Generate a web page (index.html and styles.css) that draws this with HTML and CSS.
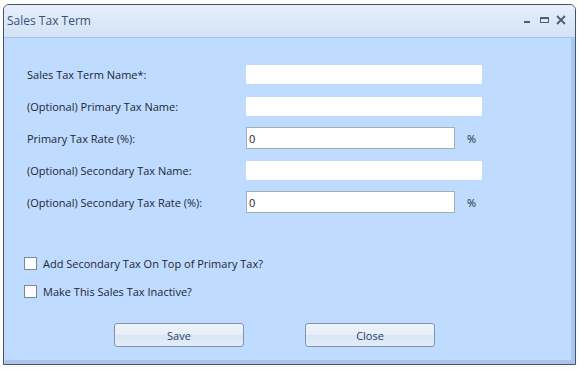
FILE: index.html
```html
<!DOCTYPE html>
<html lang="en">
<head>
<meta charset="UTF-8">
<meta name="viewport" content="width=device-width, initial-scale=1.0">
<title>Sales Tax Term</title>
<link rel="stylesheet" href="styles.css">
</head>
<body>

<div class="window">
    <div class="titlebar">
        <span class="title">Sales Tax Term</span>
        <div class="controls">
            <svg width="10" height="10" viewBox="0 0 10 10"><rect x="1" y="6" width="6" height="2" fill="#4f5d76"/></svg>
            <svg width="11" height="10" viewBox="0 0 11 10"><rect x="1.5" y="2.5" width="8" height="5" fill="none" stroke="#4f5d76"/><rect x="1" y="2" width="9" height="2" fill="#4f5d76"/></svg>
            <svg width="10" height="10" viewBox="0 0 10 10"><path d="M1 1 L9 9 M9 1 L1 9" stroke="#4f5d76" stroke-width="1.8"/></svg>
        </div>
    </div>
    <div class="client">
        <form class="fields">
            <label class="lbl" for="termName">Sales Tax Term Name*:</label>
            <input class="txt flat" id="termName" type="text" value="">

            <label class="lbl" for="primName">(Optional) Primary Tax Name:</label>
            <input class="txt flat" id="primName" type="text">

            <label class="lbl" for="primRate">Primary Tax Rate (%):</label>
            <input class="txt rate" id="primRate" type="text" value="0">
            <span class="pct">%</span>

            <label class="lbl" for="secName">(Optional) Secondary Tax Name:</label>
            <input class="txt flat" id="secName" type="text">

            <label class="lbl" for="secRate">(Optional) Secondary Tax Rate (%):</label>
            <input class="txt rate" id="secRate" type="text" value="0">
            <span class="pct">%</span>
        </form>

        <div class="checks">
            <label class="check"><span class="box"></span>Add Secondary Tax On Top of Primary Tax?</label>
            <label class="check"><span class="box"></span>Make This Sales Tax Inactive?</label>
        </div>

        <div class="buttons">
            <button type="button" class="btn">Save</button>
            <button type="button" class="btn">Close</button>
        </div>
    </div>
</div>

</body>
</html>
```

FILE: styles.css
```css
body {
    margin: 0;
    padding: 0;
    background: #fdfdfb;
    font-family: "Open Sans", "Noto Sans", sans-serif;
    font-size: 11px;
    color: #1e2a3a;
    height: 369px;
    overflow: hidden;
}

.window {
    margin: 4px 0 0 3px;
    width: 571px;
    height: 359px;
    border: 1px solid #41536e;
    border-radius: 6px 6px 0 0;
    background: #bfdbff;
    display: flex;
    flex-direction: column;
    overflow: hidden;
}

.titlebar {
    height: 33px;
    flex: none;
    display: flex;
    align-items: center;
    justify-content: space-between;
    padding: 0 9px 2px 3px;
    background: linear-gradient(#e8f0fb, #dde9f8 45%, #d3e3f6);
    border-bottom: 1px solid #a9c2e2;
    box-sizing: border-box;
}

.title {
    font-size: 12px;
    color: #35507c;
}

.controls {
    display: flex;
    gap: 6px;
    align-items: center;
}

.client {
    flex: 1;
    border-left: 1px solid #c7dcf6;
    border-right: 4px solid #aac8ee;
    border-bottom: 4px solid #a9c4e6;
}

.fields {
    display: grid;
    grid-template-columns: 219px 209px 27px;
    grid-auto-rows: 22px;
    row-gap: 10px;
    align-items: center;
    padding: 25px 0 0 22px;
    margin: 0;
}

.lbl {
    grid-column: 1;
    color: #1c2733;
}

.txt {
    font-family: "Open Sans", "Noto Sans", sans-serif;
    font-size: 11px;
    height: 19px;
    padding: 0 2px;
    margin: 0;
    box-sizing: border-box;
    border: none;
    background: #fff;
    color: #1c2733;
    outline: none;
}

.flat {
    width: 236px;
    grid-column: 2 / 4;
}

.rate {
    grid-column: 2;
    width: 209px;
    height: 22px;
    border: 1px solid #a4adba;
}

.pct {
    grid-column: 3;
    padding-left: 12px;
}

.checks {
    display: flex;
    flex-direction: column;
    gap: 13px;
    padding: 43px 0 0 19px;
}

.check {
    display: flex;
    align-items: center;
    gap: 6px;
    font-size: 11px;
    color: #1c2733;
}

.box {
    width: 11px;
    height: 11px;
    border: 1px solid #7a8799;
    background: #fff;
}

.buttons {
    display: flex;
    gap: 61px;
    padding: 24px 0 0 109px;
}

.btn {
    width: 130px;
    height: 24px;
    font-family: "Open Sans", "Noto Sans", sans-serif;
    font-size: 11px;
    color: #2a3e60;
    border: 1px solid #8293ae;
    border-radius: 3px;
    background: linear-gradient(#eef3fb, #e6eef9 50%, #d9e5f5 51%, #e3ecf8);
}
```
